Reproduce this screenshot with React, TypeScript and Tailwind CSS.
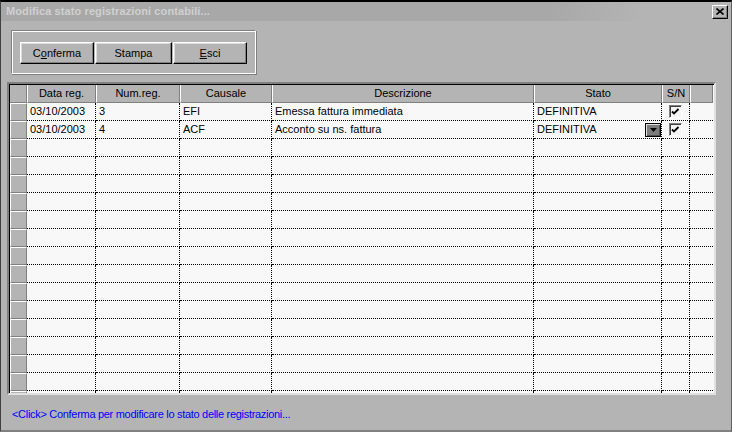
import React from 'react'

type Row = { data: string; num: string; causale: string; descr: string; stato: string; sn: boolean; combo?: boolean }

const rows: Row[] = [
  { data: '03/10/2003', num: '3', causale: 'EFI', descr: 'Emessa fattura immediata', stato: 'DEFINITIVA', sn: true },
  { data: '03/10/2003', num: '4', causale: 'ACF', descr: 'Acconto su ns. fattura', stato: 'DEFINITIVA', sn: true, combo: true },
]

const EMPTY_ROWS = 15

const cols = 'grid grid-cols-[17px_69px_84px_92px_262px_128px_28px_23px]'

const Win95Button: React.FC<{ children: React.ReactNode; className?: string }> = ({ children, className }) => (
  <button
    className={`h-[22px] border border-t-white border-l-white border-r-black border-b-black bg-[#b4b4b4] shadow-[inset_-1px_-1px_0_#808080,inset_1px_1px_0_#dcdcdc] text-[11px] text-black leading-none ${className ?? ''}`}
  >
    {children}
  </button>
)

const CheckBox: React.FC = () => (
  <div className="w-[13px] h-[13px] border border-t-[#808080] border-l-[#808080] border-r-white border-b-white bg-[#f4f4f4] shadow-[inset_1px_1px_0_#404040] flex items-center justify-center">
    <svg width="9" height="8" viewBox="0 0 9 8">
      <path d="M1 3.5 L3 5.5 L7.5 1" stroke="black" strokeWidth="1.8" fill="none" />
    </svg>
  </div>
)

const ComboButton: React.FC = () => (
  <div className="w-[16px] h-[14px] border border-black bg-[#7c7c7c] shadow-[inset_1px_1px_0_#dcdcdc,inset_-1px_-1px_0_#505050] flex items-center justify-center">
    <svg width="7" height="4" viewBox="0 0 7 4">
      <path d="M0 0 H7 L3.5 4 Z" fill="black" />
    </svg>
  </div>
)

const cell = 'h-[18px] border-r border-b border-dotted border-black flex items-center px-[3px] truncate'
const selector = 'h-[18px] bg-[#b4b4b4] border-t border-l border-t-white border-l-white border-r border-b border-r-[#808080] border-b-[#808080]'

export default function App() {
  return (
    <div
      className="w-[732px] h-[432px] bg-[#b4b4b4] border-t-2 border-t-black border-l border-l-[#404040] border-r border-r-[#606060] border-b-2 border-b-[#808080] flex flex-col overflow-hidden"
      style={{ fontFamily: '"Liberation Sans", Arial, sans-serif' }}
    >
      {/* Title bar */}
      <div className="h-[19px] flex items-center justify-between bg-[linear-gradient(to_right,#a8a8a8_75%,#b4b4b4_88%)] pl-[5px] pr-[3px]">
        <span className="text-[11px] font-bold text-[#d0d0d0] tracking-[0.1px]">Modifica stato registrazioni contabili...</span>
        <div className="w-[16px] h-[14px] border border-t-white border-l-white border-r-black border-b-black bg-[#b4b4b4] shadow-[inset_-1px_-1px_0_#808080] flex items-center justify-center">
          <svg width="8" height="7" viewBox="0 0 8 7">
            <path d="M0.5 0.5 L7.5 6.5 M7.5 0.5 L0.5 6.5" stroke="black" strokeWidth="1.6" />
          </svg>
        </div>
      </div>

      {/* Button group */}
      <div className="ml-[10px] mt-[9px] w-[245px] h-[44px] border border-t-[#808080] border-l-[#808080] border-r-white border-b-white shadow-[inset_1px_1px_0_white,1px_1px_0_#808080] flex items-start pt-[11px] pl-[8px]">
        <Win95Button className="w-[74px]">
          C<span className="underline">o</span>nferma
        </Win95Button>
        <Win95Button className="w-[77px] ml-[1px]">Stampa</Win95Button>
        <Win95Button className="w-[74px] ml-[1px]">
          <span className="underline">E</span>sci
        </Win95Button>
      </div>

      {/* Grid */}
      <div className="ml-[6px] mt-[8px] w-[709px] h-[313px] border-2 border-t-[#808080] border-l-[#808080] border-r-[#e0e0e0] border-b-[#e0e0e0] shadow-[inset_1px_1px_0_#000] bg-[#f8f8f8] overflow-hidden pl-[1px] pt-[1px]">
        <div className={`${cols} text-[11px] text-black`}>
          <div className="h-[18px] bg-[#b4b4b4] border-r border-b border-[#808080]" />
          {['Data reg.', 'Num.reg.', 'Causale', 'Descrizione', 'Stato', 'S/N', ''].map((h, i) => (
            <div
              key={i}
              className="h-[18px] bg-[#b4b4b4] border-r border-b border-r-[#808080] border-b-[#808080] border-l border-l-white flex items-center justify-center"
            >
              {h}
            </div>
          ))}

          {rows.map((r, i) => (
            <React.Fragment key={i}>
              <div className={selector} />
              <div className={cell}>{r.data}</div>
              <div className={cell}>{r.num}</div>
              <div className={cell}>{r.causale}</div>
              <div className={cell}>{r.descr}</div>
              <div className={`${cell} justify-between pr-0`}>
                <span>{r.stato}</span>
                {r.combo && <ComboButton />}
              </div>
              <div className={`${cell} justify-center`}>{r.sn && <CheckBox />}</div>
              <div className="h-[18px] border-b border-dotted border-black" />
            </React.Fragment>
          ))}

          {Array.from({ length: EMPTY_ROWS }).map((_, i) => (
            <React.Fragment key={`e${i}`}>
              <div className={selector} />
              <div className={cell} />
              <div className={cell} />
              <div className={cell} />
              <div className={cell} />
              <div className={cell} />
              <div className={cell} />
              <div className="h-[18px] border-b border-dotted border-black" />
            </React.Fragment>
          ))}
        </div>
      </div>

      {/* Status text */}
      <div className="ml-[11px] mt-[11px] text-[11px] tracking-[-0.3px] text-[#0000ff]">
        &lt;Click&gt; Conferma per modificare lo stato delle registrazioni...
      </div>
    </div>
  )
}
